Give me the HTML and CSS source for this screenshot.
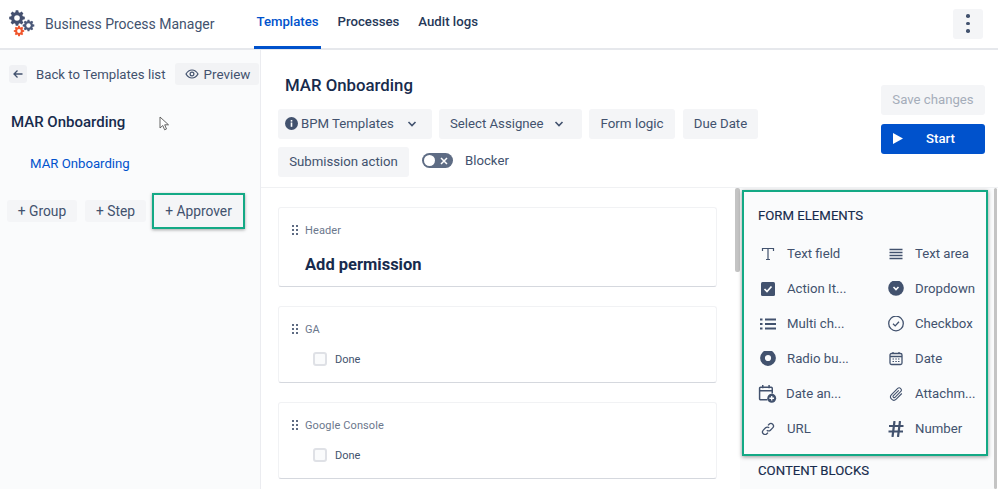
FILE: index.html
```html
<!DOCTYPE html>
<html lang="en">
<head>
<meta charset="utf-8">
<title>Business Process Manager</title>
<link rel="stylesheet" href="styles.css">
</head>
<body>
<svg width="0" height="0" class="defs" aria-hidden="true">
  <defs>
    <g id="gear">
      <path d="M-1.600-10h3.200l.5 2.600 1.600.7 2.200-1.500 2.300 2.300-1.500 2.200.7 1.600 2.600.5v3.200l-2.600.5-.7 1.600 1.500 2.200-2.300 2.300-2.200-1.500-1.600.7-.5 2.600h-3.200l-.5-2.600-1.600-.7-2.200 1.500-2.300-2.300 1.500-2.200-.7-1.600-2.600-.5v-3.200l2.600-.5.7-1.600-1.500-2.200 2.300-2.300 2.200 1.500 1.600-.7z"/>
    </g>
  </defs>
</svg>
<header class="topbar">
  <svg class="logo" width="26" height="27" viewBox="0 0 26 27">
    <use href="#gear" transform="translate(8 8) scale(.78)" fill="#44506f"/>
    <circle cx="8" cy="8" r="2.800" fill="#fff"/>
    <use href="#gear" transform="translate(19.500 15.500) scale(.58)" fill="#4a5878"/>
    <circle cx="19.500" cy="15.500" r="2.200" fill="#fff"/>
    <use href="#gear" transform="translate(10 21) scale(.52)" fill="#f0552b"/>
    <circle cx="10" cy="21" r="1.900" fill="#fff"/>
  </svg>
  <span class="brand">Business Process Manager</span>
  <nav class="nav">
    <a class="nav-item is-active">Templates</a>
    <a class="nav-item">Processes</a>
    <a class="nav-item">Audit logs</a>
  </nav>
  <button class="kebab" aria-label="More"><i></i><i></i><i></i></button>
</header>

<div class="layout">
  <aside class="side">
    <div class="side-top">
      <span class="back-icon">
        <svg width="12" height="12" viewBox="0 0 12 12"><path d="M10.500 6H2M5.500 2.500 2 6l3.500 3.500" fill="none" stroke="#42526e" stroke-width="1.300"/></svg>
      </span>
      <span class="back-text">Back to Templates list</span>
      <button class="btn btn-preview">
        <svg width="14" height="10" viewBox="0 0 14 10"><path d="M1 5c1.600-2.700 3.600-4 6-4s4.400 1.300 6 4c-1.600 2.700-3.600 4-6 4S2.600 7.700 1 5z" fill="none" stroke="#42526e" stroke-width="1.200"/><circle cx="7" cy="5" r="1.900" fill="none" stroke="#42526e" stroke-width="1.200"/></svg>
        Preview
      </button>
    </div>
    <h2 class="side-title">MAR Onboarding</h2>
    <a class="side-link">MAR Onboarding</a>
    <div class="side-actions">
      <button class="btn btn-small btn-group">+ Group</button>
      <button class="btn btn-small btn-step">+ Step</button>
      <button class="btn btn-small btn-approver">+ Approver</button>
    </div>
    <svg class="cursor" width="11" height="15" viewBox="0 0 11 15"><path d="M1 1v11l2.800-2.500 1.800 4.300 1.900-.8-1.800-4.200H9.500z" fill="#fff" stroke="#555" stroke-width=".9"/></svg>
  </aside>

  <main class="main">
    <section class="head">
      <div class="head-left">
        <h1 class="title">MAR Onboarding</h1>
        <div class="tools">
          <button class="btn btn-tool btn-bpm">
            <svg width="13" height="13" viewBox="0 0 13 13"><circle cx="6.500" cy="6.500" r="6.500" fill="#42526e"/><rect x="5.700" y="5.500" width="1.600" height="4.300" fill="#fff"/><rect x="5.700" y="3" width="1.600" height="1.600" fill="#fff"/></svg>
            <span>BPM Templates</span>
            <svg class="chev" width="10" height="6" viewBox="0 0 10 6"><path d="M1.500 1 5 4.500 8.500 1" fill="none" stroke="#42526e" stroke-width="1.600"/></svg>
          </button>
          <button class="btn btn-tool btn-assignee">
            <span>Select Assignee</span>
            <svg class="chev" width="10" height="6" viewBox="0 0 10 6"><path d="M1.500 1 5 4.500 8.500 1" fill="none" stroke="#42526e" stroke-width="1.600"/></svg>
          </button>
          <button class="btn btn-tool btn-logic">Form logic</button>
          <button class="btn btn-tool btn-due">Due Date</button>
          <button class="btn btn-tool btn-submit">Submission action</button>
          <span class="toggle"><i class="knob"></i><svg width="8" height="8" viewBox="0 0 8 8"><path d="M1 1l6 6M7 1 1 7" stroke="#fff" stroke-width="1.500"/></svg></span>
          <span class="blocker">Blocker</span>
        </div>
      </div>
      <div class="head-right">
        <button class="btn btn-save">Save changes</button>
        <button class="btn btn-start">
          <svg width="10" height="11" viewBox="0 0 10 11"><path d="M0 0l10 5.500L0 11z" fill="#fff"/></svg>
          <span>Start</span>
        </button>
      </div>
    </section>

    <section class="body">
      <div class="canvas">
        <article class="card card-header">
          <div class="card-label"><span class="grip"></span>Header</div>
          <h3 class="card-title">Add permission</h3>
        </article>
        <article class="card">
          <div class="card-label"><span class="grip"></span>GA</div>
          <label class="done"><span class="box"></span>Done</label>
        </article>
        <article class="card">
          <div class="card-label"><span class="grip"></span>Google Console</div>
          <label class="done"><span class="box"></span>Done</label>
        </article>
      </div>
      <div class="track"><span class="thumb"></span></div>
      <div class="panel">
        <div class="form-box">
          <h4 class="panel-title">FORM ELEMENTS</h4>
          <ul class="elements">
            <li><svg viewBox="0 0 16 16"><path d="M2.500 5V2.500h11V5M8 2.500v11M6 13.500h4" fill="none" stroke="#42526e" stroke-width="1.200"/></svg>Text field</li>
            <li><svg viewBox="0 0 16 16"><path d="M1.500 3.500h13M1.500 6.500h13M1.500 9.500h13M1.500 12.500h13" stroke="#42526e" stroke-width="1.300"/></svg>Text area</li>
            <li><svg viewBox="0 0 16 16"><rect x="1" y="1" width="14" height="14" rx="1.500" fill="#42526e"/><path d="M4.500 8l2.500 2.500 4.500-5" fill="none" stroke="#fff" stroke-width="1.700"/></svg>Action It...</li>
            <li><svg viewBox="0 0 16 16"><circle cx="8" cy="7" r="7.800" fill="#42526e"/><path d="M5.500 6 8 8.500 10.500 6" fill="none" stroke="#fff" stroke-width="1.600"/></svg>Dropdown</li>
            <li><svg viewBox="0 0 16 16"><path d="M5 3.500h11M5 8h11M5 12.500h11" stroke="#42526e" stroke-width="2"/><path d="M0 3.500h2.500M0 8h2.500M0 12.500h2.500" stroke="#42526e" stroke-width="2"/></svg>Multi ch...</li>
            <li><svg viewBox="0 0 16 16"><circle cx="8" cy="7.500" r="7.300" fill="none" stroke="#42526e" stroke-width="1.300"/><path d="M5 7.700l2.200 2.200 3.800-4.200" fill="none" stroke="#42526e" stroke-width="1.300"/></svg>Checkbox</li>
            <li><svg viewBox="0 0 16 16"><circle cx="8" cy="7" r="5.500" fill="none" stroke="#42526e" stroke-width="4.800"/></svg>Radio bu...</li>
            <li><svg viewBox="0 0 16 16"><rect x="2" y="2.500" width="12" height="11" rx="1.500" fill="none" stroke="#42526e" stroke-width="1.300"/><path d="M2 5.500h12" stroke="#42526e" stroke-width="1.500"/><path d="M5 1v2M11 1v2" stroke="#42526e" stroke-width="1.300"/><path d="M4.500 8h1.500M7.300 8h1.500M10 8h1.500M4.500 10.500h1.500M7.300 10.500h1.500M10 10.500h1.500" stroke="#42526e"/></svg>Date</li>
            <li class="item-wide"><svg viewBox="0 0 18 18"><path d="M9 15H2.500a1 1 0 0 1-1-1V4a1 1 0 0 1 1-1h10a1 1 0 0 1 1 1v5" fill="none" stroke="#42526e" stroke-width="1.400"/><path d="M1.500 6.500h12M4.500 1v3M10.500 1v3" stroke="#42526e" stroke-width="1.400"/><circle cx="13" cy="13.500" r="4.200" fill="#42526e"/><path d="M13 11.300v4.400M10.800 13.500h4.400" stroke="#fff" stroke-width="1.200"/></svg>Date an...</li>
            <li><svg viewBox="0 0 16 16"><path d="M13.800 7.500 8.200 13.100a3.200 3.200 0 0 1-4.700-4.500L9.700 2.400a2.200 2.200 0 0 1 3.100 3.100L7 11.300a1.100 1.100 0 0 1-1.600-1.600L10.800 4.300" fill="none" stroke="#42526e" stroke-width="1.100"/></svg>Attachm...</li>
            <li><svg viewBox="0 0 16 16"><path d="M6.800 9.200a2.500 2.500 0 0 0 3.600 0l2.300-2.300a2.500 2.500 0 0 0-3.600-3.600L8 4.400M9.200 6.800a2.500 2.500 0 0 0-3.600 0L3.300 9.100a2.500 2.500 0 0 0 3.600 3.600L8 11.600" fill="none" stroke="#42526e" stroke-width="1.300"/></svg>URL</li>
            <li><svg viewBox="0 0 16 16"><path d="M6.500 0 4.500 16M12 0 10 16M1 5h14.500M.5 10.500H15" fill="none" stroke="#42526e" stroke-width="2.200"/></svg>Number</li>
          </ul>
        </div>
        <h4 class="panel-title panel-next">CONTENT BLOCKS</h4>
      </div>
      <div class="track track-end"><span class="thumb thumb-end"></span></div>
    </section>
  </main>
</div>
</body>
</html>
```
FILE: styles.css
```css
* { box-sizing: border-box; }
html, body { height: 100%; }
body {
  margin: 0;
  width: 998px;
  height: 489px;
  overflow: hidden;
  background: #fff;
  color: #172b4d;
  font-family: Roboto, "Liberation Sans", sans-serif;
  font-size: 13.200px;
  display: flex;
  flex-direction: column;
}
.defs { position: absolute; }
button { font: inherit; border: 0; cursor: default; }

.topbar {
  flex: none;
  height: 50px;
  display: flex;
  align-items: center;
  padding: 0 15px 0 9px;
  background: #fff;
  border-bottom: 2px solid #e6e8ec;
}
.logo { flex: none; margin-top: -2px; }
.brand { margin-left: 10px; font-size: 14px; color: #42526e; white-space: nowrap; }
.nav { display: flex; align-self: stretch; margin-left: 40px; flex: 1; }
.nav-item {
  display: flex;
  align-items: center;
  height: 49px;
  padding: 0 2px 3px;
  margin-right: 15px;
  color: #253858;
  font-weight: 500;
  font-size: 13.200px;
  border-bottom: 3px solid transparent;
}
.is-active { color: #0052cc; border-bottom-color: #0052cc; }
.kebab {
  width: 30px;
  height: 30px;
  margin-top: -1px;
  display: flex;
  flex-direction: column;
  align-items: center;
  justify-content: center;
  gap: 4px;
  background: #f4f5f7;
  border-radius: 3px;
  padding: 0;
}
.kebab i { width: 3.500px; height: 3.500px; border-radius: 50%; background: #42526e; }

.layout { flex: 1; display: flex; min-height: 0; }

.side {
  position: relative;
  flex: none;
  width: 261px;
  background: #fafbfc;
  border-right: 1px solid #ebecf0;
}
.side-top { display: flex; align-items: center; height: 30px; margin-top: 9px; padding-left: 9px; }
.back-icon {
  width: 18px; height: 18px;
  display: flex; align-items: center; justify-content: center;
  background: #f0f1f4;
  border-radius: 3px;
}
.back-text { margin-left: 9px; color: #42526e; white-space: nowrap; }
.btn {
  display: flex;
  align-items: center;
  justify-content: center;
  background: #f4f5f7;
  color: #42526e;
  border-radius: 3px;
  padding: 0;
  white-space: nowrap;
}
.btn-preview { margin-left: 10px; width: 84px; height: 22px; gap: 5px; background: #f2f3f5; font-size: 13.400px; }
.side-title { margin: 21px 0 0 11px; font-size: 15px; font-weight: 500; line-height: 24px; color: #172b4d; }
.side-link { display: block; margin: 20px 0 0 30px; color: #0052cc; line-height: 20px; }
.side-actions { display: flex; align-items: center; margin: 19px 0 0 7px; }
.btn-small { height: 22px; font-size: 13.800px; }
.btn-group { width: 70px; }
.btn-step { width: 61px; margin-left: 8px; }
.btn-approver {
  width: 93px;
  height: 36px;
  margin-left: 6px;
  background: #f4f5f7;
  border: 2px solid #13a985;
  box-shadow: 0 1px 3px rgba(0,0,0,.35);
  border-radius: 0;
}
.cursor { position: absolute; left: 159px; top: 66px; }

.main { flex: 1; min-width: 0; display: flex; flex-direction: column; }
.head {
  flex: none;
  height: 138px;
  display: flex;
  justify-content: space-between;
  padding: 0 13px 0 17px;
  border-bottom: 1px solid #f0f1f3;
}
.head-left { width: 500px; }
.title { margin: 23px 0 12px 7px; font-size: 16.800px; font-weight: 500; line-height: 24px; color: #172b4d; }
.tools { display: flex; flex-wrap: wrap; align-items: center; column-gap: 7px; row-gap: 8px; }
.btn-tool { height: 30px; padding-bottom: 1px; }
.btn-bpm { width: 154px; gap: 3px; justify-content: flex-start; padding-left: 7px; }
.btn-assignee { width: 143px; justify-content: flex-start; padding-left: 11px; }
.btn-logic { width: 86px; font-size: 13.400px; }
.btn-due { width: 75px; margin-left: 1px; }
.btn-submit { width: 131px; padding-bottom: 2px; }
.chev { margin-left: 10px; }
.toggle {
  position: relative;
  width: 31px; height: 15px;
  margin: 0 0 3px 6px;
  background: #5e6c84;
  border-radius: 8px;
  display: flex;
  align-items: center;
  justify-content: flex-end;
  padding-right: 5px;
}
.knob { position: absolute; left: 2px; top: 2px; width: 11px; height: 11px; background: #fff; border-radius: 50%; }
.blocker { margin: 0 0 3px 5px; color: #42526e; }
.head-right { width: 104px; display: flex; flex-direction: column; gap: 9px; margin-top: 35px; }
.btn-save { height: 30px; color: #a5adba; background: #f4f5f7; padding-bottom: 1px; }
.btn-start { height: 30px; background: #0052cc; color: #fff; font-weight: 500; justify-content: flex-start; padding: 0 0 1px 12px; }
.btn-start span { margin-left: 23px; }

.body { flex: 1; min-height: 0; display: flex; overflow: hidden; }
.canvas {
  flex: none;
  width: 474px;
  padding: 19px 18px 0 17px;
  display: flex;
  flex-direction: column;
  gap: 19px;
}
.card {
  flex: none;
  height: 77px;
  background: #fff;
  border: 1px solid #f1f2f4;
  border-bottom: 1px solid #d5d8de;
  border-radius: 3px;
  padding: 14px 0 0 12px;
}
.card-header { height: 80px; }
.card-label { display: flex; align-items: center; height: 16px; font-size: 11px; color: #6b778c; letter-spacing: .01em; }
.grip {
  width: 8px; height: 10px; margin-right: 6px;
  background-image: radial-gradient(circle, #5b6880 0.7px, transparent 1px);
  background-size: 4px 4px;
  background-position: 0 -1px;
}
.card-title { margin: 17px 0 0 14px; font-size: 16.500px; font-weight: 700; line-height: 20px; color: #172b4d; }
.done { display: flex; align-items: center; margin: 14px 0 0 22px; font-size: 11px; color: #42526e; height: 16px; }
.box { width: 14px; height: 14px; border: 2px solid #dfe1e6; border-radius: 3px; background: #fafbfc; margin-right: 8px; }

.track { flex: none; width: 5px; }
.thumb { display: block; width: 5px; height: 84px; background: #c4c4c4; border-radius: 2px; }
.track-end { width: 4px; }
.thumb-end { width: 3px; height: 100%; }
.panel { flex: none; width: 254px; background: #fafbfc; padding: 2px 6px 0 2px; }
.form-box {
  height: 266px;
  border: 2px solid #13a985;
  box-shadow: 0 1px 4px rgba(0,0,0,.4);
  padding: 15px 12px 0 14px;
}
.panel-title { margin: 0; font-size: 13.200px; font-weight: 400; line-height: 18px; color: #172b4d; -webkit-text-stroke: .15px #172b4d; }
.panel-next { margin: 6px 0 0 16px; }
.elements {
  list-style: none;
  margin: 11px 0 0 0;
  padding: 0;
  display: grid;
  grid-template-columns: 128px 100px;
  grid-auto-rows: 35px;
}
.elements li { display: flex; align-items: center; color: #42526e; white-space: nowrap; }
.elements svg { flex: none; width: 16px; height: 16px; margin: 0 11px 0 2px; }
.elements .item-wide svg { width: 19px; height: 19px; margin: 0 9px 0 0; }
```
